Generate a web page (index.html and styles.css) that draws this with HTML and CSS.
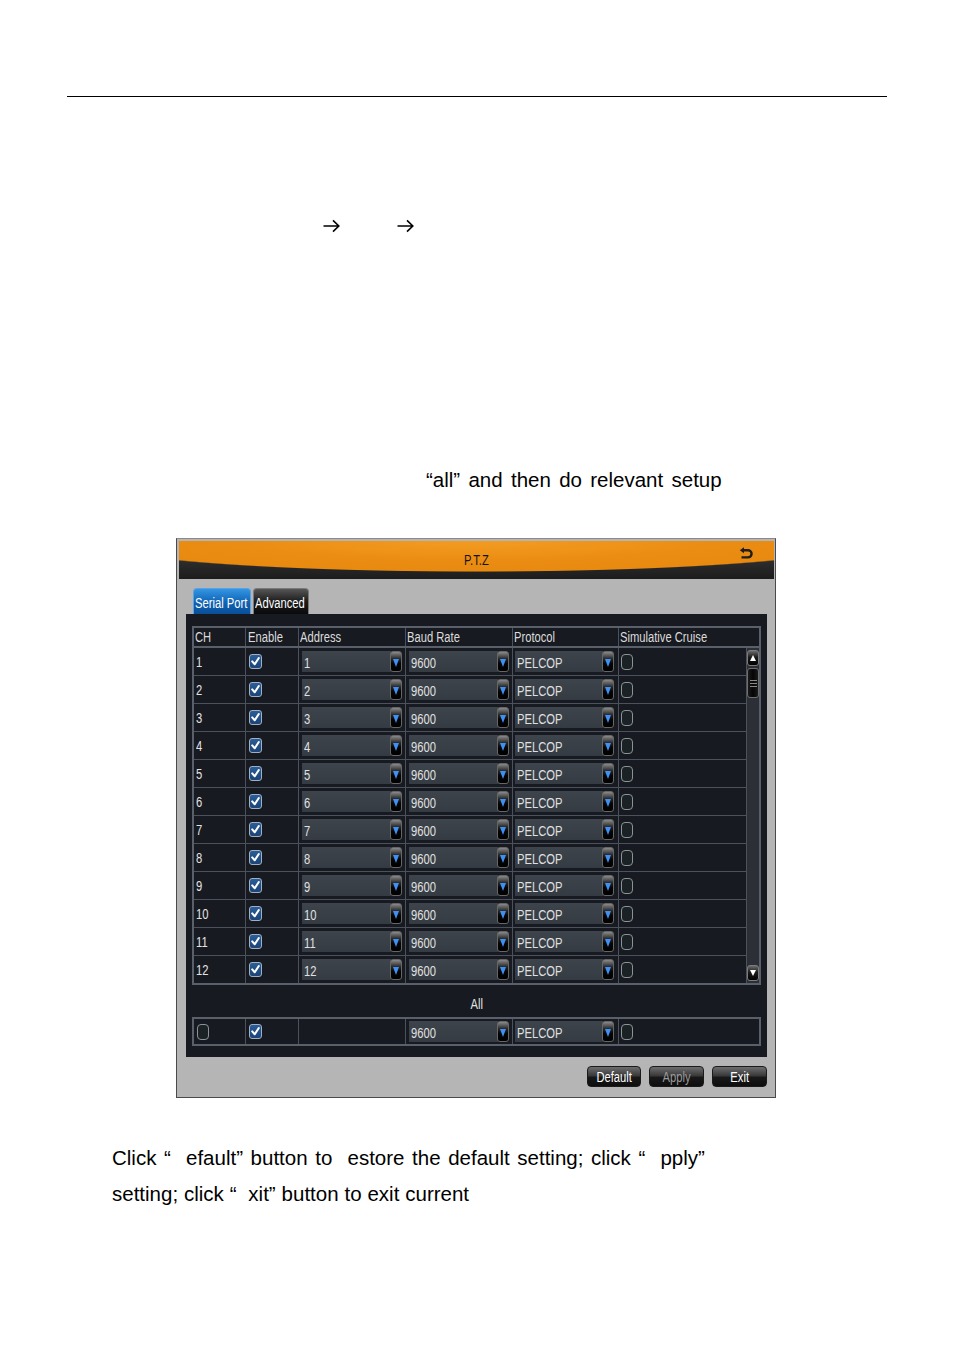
FILE: index.html
```html
<!DOCTYPE html>
<html>
<head>
<meta charset="utf-8">
<title>P.T.Z</title>
<link rel="stylesheet" href="styles.css">
</head>
<body>
<div class="page">
  <div class="rule"></div>
  <div class="arrows">
    <svg class="arrow" viewBox="0 0 17 14"><path d="M0.5 7 H15.6 M10 1.4 L15.8 7 L10 12.6"/></svg>
    <svg class="arrow" viewBox="0 0 17 14"><path d="M0.5 7 H15.6 M10 1.4 L15.8 7 L10 12.6"/></svg>
  </div>
  <p class="line all-line">“all” and then do relevant setup</p>

  <div class="dialog">
    <div class="titlebar">
      <span class="t tc title">P.T.Z</span>
      <svg class="back" viewBox="0 0 14 13"><path class="back-line" d="M4 3.2 H9 A3.6 3.6 0 0 1 9 10.4 H2.5"/><path class="back-head" d="M0.8 3.2 L5 0.2 L5 6.2 Z"/></svg>
    </div>
    <div class="dbody">
      <div class="tabs">
        <div class="tab active"><span class="t">Serial Port</span></div>
        <div class="tab adv"><span class="t">Advanced</span></div>
      </div>
      <div class="panel">
        <div class="table">
          <div class="grid thead">
            <div class="c"><span class="t">CH</span></div>
            <div class="c"><span class="t">Enable</span></div>
            <div class="c"><span class="t">Address</span></div>
            <div class="c"><span class="t">Baud Rate</span></div>
            <div class="c"><span class="t">Protocol</span></div>
            <div class="c"><span class="t">Simulative Cruise</span></div>
          </div>
          <div class="tbody">
            <div class="rows">
              <div class="grid row">
                <div class="c ch"><span class="t">1</span></div>
                <div class="c"><span class="cb on"><svg viewBox="0 0 13 15"><path d="M2.6 7.4 L5.6 10.8 L10.4 3.4"/></svg></span></div>
                <div class="c"><div class="dd"><span class="dd-f"><span class="t">1</span></span><span class="dd-b"></span></div></div>
                <div class="c"><div class="dd"><span class="dd-f"><span class="t">9600</span></span><span class="dd-b"></span></div></div>
                <div class="c"><div class="dd pr"><span class="dd-f"><span class="t">PELCOP</span></span><span class="dd-b"></span></div></div>
                <div class="c"><span class="cb off"></span></div>
              </div>
              <div class="grid row">
                <div class="c ch"><span class="t">2</span></div>
                <div class="c"><span class="cb on"><svg viewBox="0 0 13 15"><path d="M2.6 7.4 L5.6 10.8 L10.4 3.4"/></svg></span></div>
                <div class="c"><div class="dd"><span class="dd-f"><span class="t">2</span></span><span class="dd-b"></span></div></div>
                <div class="c"><div class="dd"><span class="dd-f"><span class="t">9600</span></span><span class="dd-b"></span></div></div>
                <div class="c"><div class="dd pr"><span class="dd-f"><span class="t">PELCOP</span></span><span class="dd-b"></span></div></div>
                <div class="c"><span class="cb off"></span></div>
              </div>
              <div class="grid row">
                <div class="c ch"><span class="t">3</span></div>
                <div class="c"><span class="cb on"><svg viewBox="0 0 13 15"><path d="M2.6 7.4 L5.6 10.8 L10.4 3.4"/></svg></span></div>
                <div class="c"><div class="dd"><span class="dd-f"><span class="t">3</span></span><span class="dd-b"></span></div></div>
                <div class="c"><div class="dd"><span class="dd-f"><span class="t">9600</span></span><span class="dd-b"></span></div></div>
                <div class="c"><div class="dd pr"><span class="dd-f"><span class="t">PELCOP</span></span><span class="dd-b"></span></div></div>
                <div class="c"><span class="cb off"></span></div>
              </div>
              <div class="grid row">
                <div class="c ch"><span class="t">4</span></div>
                <div class="c"><span class="cb on"><svg viewBox="0 0 13 15"><path d="M2.6 7.4 L5.6 10.8 L10.4 3.4"/></svg></span></div>
                <div class="c"><div class="dd"><span class="dd-f"><span class="t">4</span></span><span class="dd-b"></span></div></div>
                <div class="c"><div class="dd"><span class="dd-f"><span class="t">9600</span></span><span class="dd-b"></span></div></div>
                <div class="c"><div class="dd pr"><span class="dd-f"><span class="t">PELCOP</span></span><span class="dd-b"></span></div></div>
                <div class="c"><span class="cb off"></span></div>
              </div>
              <div class="grid row">
                <div class="c ch"><span class="t">5</span></div>
                <div class="c"><span class="cb on"><svg viewBox="0 0 13 15"><path d="M2.6 7.4 L5.6 10.8 L10.4 3.4"/></svg></span></div>
                <div class="c"><div class="dd"><span class="dd-f"><span class="t">5</span></span><span class="dd-b"></span></div></div>
                <div class="c"><div class="dd"><span class="dd-f"><span class="t">9600</span></span><span class="dd-b"></span></div></div>
                <div class="c"><div class="dd pr"><span class="dd-f"><span class="t">PELCOP</span></span><span class="dd-b"></span></div></div>
                <div class="c"><span class="cb off"></span></div>
              </div>
              <div class="grid row">
                <div class="c ch"><span class="t">6</span></div>
                <div class="c"><span class="cb on"><svg viewBox="0 0 13 15"><path d="M2.6 7.4 L5.6 10.8 L10.4 3.4"/></svg></span></div>
                <div class="c"><div class="dd"><span class="dd-f"><span class="t">6</span></span><span class="dd-b"></span></div></div>
                <div class="c"><div class="dd"><span class="dd-f"><span class="t">9600</span></span><span class="dd-b"></span></div></div>
                <div class="c"><div class="dd pr"><span class="dd-f"><span class="t">PELCOP</span></span><span class="dd-b"></span></div></div>
                <div class="c"><span class="cb off"></span></div>
              </div>
              <div class="grid row">
                <div class="c ch"><span class="t">7</span></div>
                <div class="c"><span class="cb on"><svg viewBox="0 0 13 15"><path d="M2.6 7.4 L5.6 10.8 L10.4 3.4"/></svg></span></div>
                <div class="c"><div class="dd"><span class="dd-f"><span class="t">7</span></span><span class="dd-b"></span></div></div>
                <div class="c"><div class="dd"><span class="dd-f"><span class="t">9600</span></span><span class="dd-b"></span></div></div>
                <div class="c"><div class="dd pr"><span class="dd-f"><span class="t">PELCOP</span></span><span class="dd-b"></span></div></div>
                <div class="c"><span class="cb off"></span></div>
              </div>
              <div class="grid row">
                <div class="c ch"><span class="t">8</span></div>
                <div class="c"><span class="cb on"><svg viewBox="0 0 13 15"><path d="M2.6 7.4 L5.6 10.8 L10.4 3.4"/></svg></span></div>
                <div class="c"><div class="dd"><span class="dd-f"><span class="t">8</span></span><span class="dd-b"></span></div></div>
                <div class="c"><div class="dd"><span class="dd-f"><span class="t">9600</span></span><span class="dd-b"></span></div></div>
                <div class="c"><div class="dd pr"><span class="dd-f"><span class="t">PELCOP</span></span><span class="dd-b"></span></div></div>
                <div class="c"><span class="cb off"></span></div>
              </div>
              <div class="grid row">
                <div class="c ch"><span class="t">9</span></div>
                <div class="c"><span class="cb on"><svg viewBox="0 0 13 15"><path d="M2.6 7.4 L5.6 10.8 L10.4 3.4"/></svg></span></div>
                <div class="c"><div class="dd"><span class="dd-f"><span class="t">9</span></span><span class="dd-b"></span></div></div>
                <div class="c"><div class="dd"><span class="dd-f"><span class="t">9600</span></span><span class="dd-b"></span></div></div>
                <div class="c"><div class="dd pr"><span class="dd-f"><span class="t">PELCOP</span></span><span class="dd-b"></span></div></div>
                <div class="c"><span class="cb off"></span></div>
              </div>
              <div class="grid row">
                <div class="c ch"><span class="t">10</span></div>
                <div class="c"><span class="cb on"><svg viewBox="0 0 13 15"><path d="M2.6 7.4 L5.6 10.8 L10.4 3.4"/></svg></span></div>
                <div class="c"><div class="dd"><span class="dd-f"><span class="t">10</span></span><span class="dd-b"></span></div></div>
                <div class="c"><div class="dd"><span class="dd-f"><span class="t">9600</span></span><span class="dd-b"></span></div></div>
                <div class="c"><div class="dd pr"><span class="dd-f"><span class="t">PELCOP</span></span><span class="dd-b"></span></div></div>
                <div class="c"><span class="cb off"></span></div>
              </div>
              <div class="grid row">
                <div class="c ch"><span class="t">11</span></div>
                <div class="c"><span class="cb on"><svg viewBox="0 0 13 15"><path d="M2.6 7.4 L5.6 10.8 L10.4 3.4"/></svg></span></div>
                <div class="c"><div class="dd"><span class="dd-f"><span class="t">11</span></span><span class="dd-b"></span></div></div>
                <div class="c"><div class="dd"><span class="dd-f"><span class="t">9600</span></span><span class="dd-b"></span></div></div>
                <div class="c"><div class="dd pr"><span class="dd-f"><span class="t">PELCOP</span></span><span class="dd-b"></span></div></div>
                <div class="c"><span class="cb off"></span></div>
              </div>
              <div class="grid row last">
                <div class="c ch"><span class="t">12</span></div>
                <div class="c"><span class="cb on"><svg viewBox="0 0 13 15"><path d="M2.6 7.4 L5.6 10.8 L10.4 3.4"/></svg></span></div>
                <div class="c"><div class="dd"><span class="dd-f"><span class="t">12</span></span><span class="dd-b"></span></div></div>
                <div class="c"><div class="dd"><span class="dd-f"><span class="t">9600</span></span><span class="dd-b"></span></div></div>
                <div class="c"><div class="dd pr"><span class="dd-f"><span class="t">PELCOP</span></span><span class="dd-b"></span></div></div>
                <div class="c"><span class="cb off"></span></div>
              </div>
            </div>
            <div class="scroll">
              <div class="sb-btn"><span class="tri up"></span></div>
              <div class="sb-thumb"><i></i><i></i><i></i></div>
              <div class="sb-space"></div>
              <div class="sb-btn"><span class="tri down"></span></div>
            </div>
          </div>
        </div>
        <div class="alllabel"><span class="t tc">All</span></div>
        <div class="table allrow">
          <div class="grid row">
            <div class="c"><span class="cb off first"></span></div>
            <div class="c"><span class="cb on"><svg viewBox="0 0 13 15"><path d="M2.6 7.4 L5.6 10.8 L10.4 3.4"/></svg></span></div>
            <div class="c"></div>
            <div class="c"><div class="dd"><span class="dd-f"><span class="t">9600</span></span><span class="dd-b"></span></div></div>
            <div class="c"><div class="dd pr"><span class="dd-f"><span class="t">PELCOP</span></span><span class="dd-b"></span></div></div>
            <div class="c"><span class="cb off"></span></div>
          </div>
        </div>
      </div>
      <div class="buttons">
        <div class="btn"><span class="t tc">Default</span></div>
        <div class="btn dis"><span class="t tc">Apply</span></div>
        <div class="btn"><span class="t tc">Exit</span></div>
      </div>
    </div>
  </div>

  <p class="line l1">Click “  efault” button to  estore the default setting; click “  pply”</p>
  <p class="line l2">setting; click “  xit” button to exit current</p>
</div>
</body>
</html>
```
FILE: styles.css
```css
* { box-sizing: border-box; }
body {
  margin: 0;
  background: #fff;
  color: #000;
  font-family: "Liberation Sans", Arial, sans-serif;
}
.page { width: 954px; height: 1354px; overflow: hidden; }

.rule { margin: 96px 0 0 67px; width: 820px; border-top: 1px solid #000; }

.arrows { display: flex; margin-top: 122px; padding-left: 323px; height: 14px; }
.arrow { display: block; width: 17px; height: 14px; fill: none; stroke: #000; stroke-width: 1.6; }
.arrow + .arrow { margin-left: 57px; }

.line { margin: 0; font-size: 20.5px; line-height: 24px; white-space: pre; }
.all-line { margin-top: 235px; padding-left: 426px; word-spacing: 2.6px; }
.l1 { margin-top: 48px; padding-left: 112px; word-spacing: 1.9px; }
.l2 { margin-top: 12px; padding-left: 112px; word-spacing: 0.2px; }

/* dialog */
.dialog {
  margin: 46px 0 0 176px;
  width: 600px;
  border: 1px solid #4a4a4a;
  border-top-color: #8a8a8a;
  background: #b5b5b5;
  padding: 2px 1px 10px 2px;
  font-family: "Liberation Sans", Arial, sans-serif;
  font-size: 14px;
}
.t {
  display: inline-block;
  transform: scaleX(0.8);
  transform-origin: 0 50%;
  white-space: nowrap;
}
.t.tc { transform-origin: 50% 50%; }

.titlebar {
  position: relative;
  height: 38px;
  background:
    radial-gradient(ellipse 390px 31px at 50% 0, #f39c22 0, #ec8d13 60%, #e88a10 97%, rgba(232,138,16,0) 100%),
    linear-gradient(#4a4a4a, #2a2a2a 60%, #1c1c1c);
  text-align: center;
  line-height: 38px;
}
.title { color: #141414; }
.back {
  position: absolute; right: 21px; top: 6px;
  width: 14px; height: 13px;
}
.back-line { fill: none; stroke: #1e1e1e; stroke-width: 2.4; }
.back-head { fill: #1e1e1e; }

.tabs { display: flex; gap: 2px; margin: 9px 0 0 14px; height: 26px; }
.tab {
  width: 56px; height: 26px;
  padding: 3px 0 0 1px;
  color: #fff; line-height: 22px;
  white-space: nowrap;
  border: 1px solid #7a7a7a; border-bottom: 0;
  border-radius: 4px 4px 0 0;
  background: linear-gradient(#565656, #1c1c1c 50%, #0a0a0a);
}
.tab.active {
  width: 58px;
  border-color: #5aa2e6;
  background: linear-gradient(#3396e2, #0f62b4 55%, #0a4f98);
}

.panel {
  margin: 0 7px;
  background: #181a21;
  padding: 12px 6px 11px;
}
.table { border: 2px solid #59606a; }
.grid { display: grid; grid-template-columns: 51px 53px 107px 107px 106px 1fr; }
.c {
  border-left: 1px solid #4c525b;
  display: flex; align-items: center;
  color: #e4e4e4;
  padding-left: 1px;
  white-space: nowrap;
  min-width: 0;
}
.c:first-child { border-left: 0; }
.thead { height: 20px; border-bottom: 2px solid #59606a; }
.thead .c { color: #dcdcdc; }
.thead .c:nth-child(2) { padding-left: 2px; }

.tbody { display: flex; }
.rows { flex: 1; }
.row { height: 28px; border-bottom: 1px solid #4c525b; }
.row.last { border-bottom: 0; height: 27px; }
.ch { padding-left: 2px; }

.dd { flex: 1; display: flex; height: 21px; margin: 0 3px 0 2px; }
.dd.pr { margin: 0 4px 0 1px; }
.dd-f {
  flex: 1;
  background: linear-gradient(#3d444c, #353b43);
  color: #e0e0e0;
  padding: 3px 0 0 2px;
  line-height: 18px;
}
.dd-b {
  position: relative;
  width: 12px; height: 21px;
  margin-left: -1px;
  border: 1px solid #666;
  border-radius: 3px;
  background: linear-gradient(#8a8a8a, #2a2a2a 35%, #050505 60%, #000);
}
.dd-b::after {
  content: "";
  position: absolute; left: 2px; top: 7px;
  border-left: 3.5px solid transparent;
  border-right: 3.5px solid transparent;
  border-top: 8px solid #3f8ff5;
}

.cb { display: block; border-radius: 3px; }
.cb.on {
  width: 13px; height: 15px;
  margin-left: 2px;
  border: 1px solid #9fb0c2;
  background: linear-gradient(#2a5d98, #1c4478);
}
.cb.on svg { display: block; width: 11px; height: 13px; fill: none; stroke: #fff; stroke-width: 2.4; stroke-linecap: round; stroke-linejoin: round; }
.cb.off {
  width: 12px; height: 16px;
  margin-left: 1px;
  border: 1px solid #8b9397;
  border-radius: 4px;
  background: #1b2226;
}
.cb.off.first { margin-left: 2px; }

.scroll {
  width: 13px;
  background: #2c3036;
  border-left: 1px solid #4c525b;
  display: flex; flex-direction: column;
  padding: 2px 0;
}
.sb-btn {
  height: 16px;
  border: 1px solid #7c7c7c;
  border-radius: 3px;
  background: linear-gradient(#6a6a6a, #1a1a1a 45%, #000);
  display: flex; align-items: center; justify-content: center;
}
.tri { display: block; border-left: 3px solid transparent; border-right: 3px solid transparent; }
.tri.up { border-bottom: 6px solid #fff; }
.tri.down { border-top: 6px solid #fff; }
.sb-thumb {
  height: 30px; margin-top: 2px;
  border: 1px solid #6e6e6e;
  border-radius: 3px;
  background: linear-gradient(90deg, #1a1a1a, #050505 50%, #1a1a1a);
  display: flex; flex-direction: column; justify-content: center; align-items: center; gap: 2px;
}
.sb-thumb i { display: block; width: 7px; height: 1px; background: #8a8a8a; }
.sb-space { flex: 1; }

.alllabel {
  height: 32px; padding-top: 6px;
  line-height: 26px;
  text-align: center;
  color: #e0e0e0;
}
.allrow .row { height: 25px; border-bottom: 0; }

.buttons { display: flex; justify-content: flex-end; gap: 8px; margin: 9px 7px 0 0; height: 21px; }
.btn {
  width: 54px; height: 21px;
  border: 1px solid #1a1a1a;
  border-radius: 4px;
  background: linear-gradient(#6e6e6e, #3a3a3a 45%, #181818 55%, #0e0e0e);
  color: #fff;
  text-align: center;
  line-height: 20px;
}
.btn + .btn { width: 55px; }
.btn.dis { color: #9a9a9a; }
```
